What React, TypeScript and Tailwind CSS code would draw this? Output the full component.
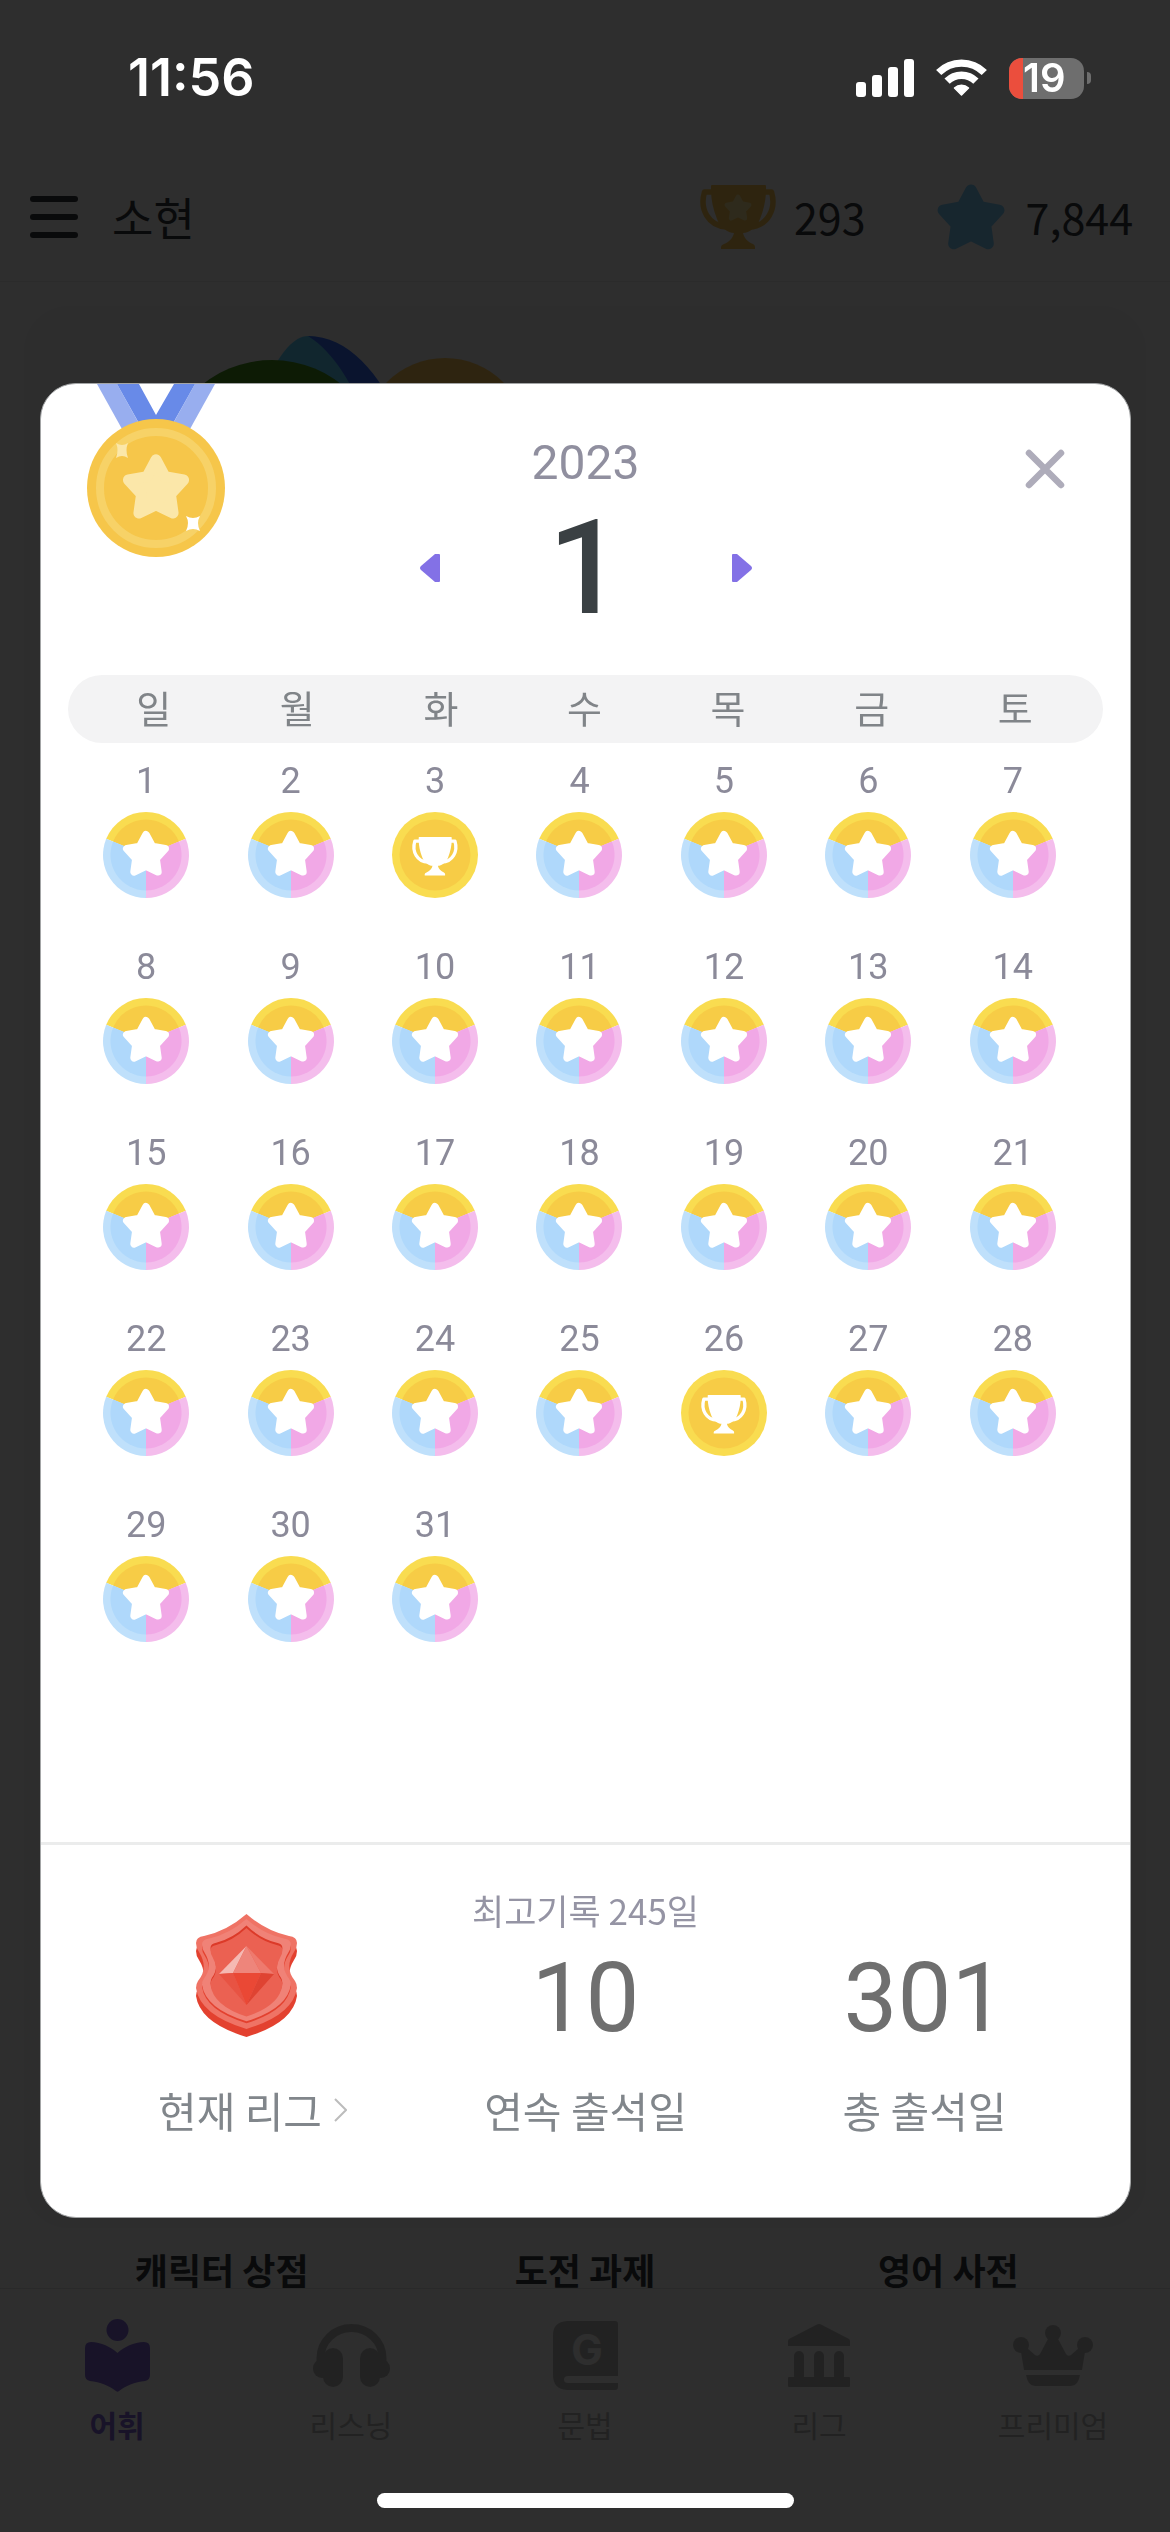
import { useState } from 'react'
import type { ReactNode } from 'react'

const WEEKDAYS = ['일', '월', '화', '수', '목', '금', '토']
const TROPHY_DAYS = [3, 26]
const SHORTCUTS = ['캐릭터 상점', '도전 과제', '영어 사전']

const SHIELD =
  'M50.5 0Q70 17 93 22Q101 23 101 29Q101 34 98 38Q88 54 99 67Q101 70 101 74Q97 101 50.5 115Q4 101 0 74Q0 70 2 67Q13 54 3 38Q0 34 0 29Q0 23 8 22Q31 17 50.5 0Z'

// Rounded star, drawn in a 100 x 96 box
function StarShape({ color }: { color: string }) {
  return (
    <polygon
      points="50,10 62.9,34.2 89.9,39 70.9,59.8 74.7,87 50,75 25.3,87 29.1,59.8 10.1,39 37.1,34.2"
      fill={color}
      stroke={color}
      strokeWidth="16"
      strokeLinejoin="round"
    />
  )
}

// Two-handled cup, drawn in a 78 x 64 box
function TrophyShape({ color }: { color: string }) {
  return (
    <g>
      <path
        d="M13 0H66Q67 0 67 1V5C67 14 65 24 61 34C58 42 50 48 44 48C45 53 49 57 54 59Q56 60 56 62V64H22V62Q22 60 25 59C30 57 34 53 35 48C29 48 21 42 18 34C14 24 12 14 12 5V1Q12 0 13 0Z"
        fill={color}
      />
      <path
        d="M14 7H5.500C0.500 24 9 41 28 42M65 7H72.500C77.500 24 69 41 50 42"
        fill="none"
        stroke={color}
        strokeWidth="5.500"
        strokeLinejoin="round"
      />
    </g>
  )
}

function StatusBar() {
  return (
    <div className="relative z-20 flex h-[156px] items-center justify-between pl-[128px] pr-[79px] text-white">
      <span className="font-['Inter',sans-serif] text-[52px] font-semibold leading-none">11:56</span>
      <div className="flex items-center gap-[22px]">
        <svg width="58" height="38" viewBox="0 0 58 38" fill="currentColor">
          <rect x="0" y="23" width="10" height="15" rx="3" />
          <rect x="16" y="16" width="10" height="22" rx="3" />
          <rect x="32" y="8" width="10" height="30" rx="3" />
          <rect x="48" y="0" width="10" height="38" rx="3" />
        </svg>
        <svg width="51" height="38" viewBox="0 0 51 38" fill="none" stroke="currentColor" strokeWidth="7.4">
          <path d="M2.700 13.500A32.300 32.300 0 0 1 48.300 13.500" />
          <path d="M11.100 22.200A20.300 20.300 0 0 1 39.900 22.200" />
          <path d="M25.500 36L18.500 29A10 10 0 0 1 32.500 29Z" fill="currentColor" strokeWidth="1.500" strokeLinejoin="round" />
        </svg>
        <div className="flex items-center gap-[3px]">
          <div className="flex h-[41px] w-[75px] items-center rounded-[13px] bg-[#6e6e6e]">
            <div className="h-full w-[14px] rounded-l-[13px] bg-[#eb4e3d]" />
            <span className="font-['Inter',sans-serif] text-[40px] font-semibold leading-none">19</span>
          </div>
          <div className="h-[12px] w-[4px] rounded-r-full bg-[#6e6e6e]" />
        </div>
      </div>
    </div>
  )
}

function Header() {
  return (
    <header className="flex h-[126px] items-center border-b border-[#ececec] pb-[4px] pl-[30px] pr-[37px] text-[45px] leading-none text-[#35393c]">
      <button aria-label="메뉴" className="flex w-[48px] flex-col gap-[12px]">
        <span className="h-[6px] w-full rounded-full bg-[#35393c]" />
        <span className="h-[6px] w-full rounded-full bg-[#35393c]" />
        <span className="h-[6px] w-full rounded-full bg-[#35393c]" />
      </button>
      <span className="ml-[34px] flex-1">소현</span>
      <svg width="78" height="64" viewBox="0 0 78 64">
        <TrophyShape color="#ffc853" />
        <g transform="translate(25 9) scale(0.28)">
          <StarShape color="#ffe79c" />
        </g>
      </svg>
      <span className="ml-[17px] text-[43px]">293</span>
      <svg className="ml-[70px]" width="70" height="67" viewBox="0 0 100 96">
        <StarShape color="#7fd0ff" />
      </svg>
      <span className="ml-[20px] text-[43px]">7,844</span>
    </header>
  )
}

const NAV_ITEMS: { label: string; icon: ReactNode }[] = [
  {
    label: '어휘',
    icon: (
      <svg width="65" height="73" viewBox="0 0 65 73" fill="currentColor">
        <circle cx="32.5" cy="11" r="11" />
        <path d="M6 23C16 23 26 28 32.500 34C39 28 49 23 59 23Q65 23 65 29V56Q65 61 60 62C50 63 40 67 34 72Q32.500 73.500 31 72C25 67 15 63 5 62Q0 61 0 56V29Q0 23 6 23Z" />
      </svg>
    ),
  },
  {
    label: '리스닝',
    icon: (
      <svg width="77" height="63" viewBox="0 0 77 63" fill="currentColor">
        <path d="M7.500 42V34A31 30 0 0 1 69.500 34V42" fill="none" stroke="currentColor" strokeWidth="8" />
        <rect x="10" y="24" width="20" height="39" rx="10" />
        <rect x="47" y="24" width="20" height="39" rx="10" />
        <rect x="0" y="35" width="18" height="19" rx="9" />
        <rect x="59" y="35" width="18" height="19" rx="9" />
      </svg>
    ),
  },
  {
    label: '문법',
    icon: (
      <svg width="65" height="69" viewBox="0 0 65 69" fill="currentColor">
        <path d="M14 0H62Q65 0 65 3V55H15Q11 55 11 58.500Q11 62 15 62H65V66Q65 69 62 69H14Q0 68 0 54V14Q0 1 14 0Z" />
        <text x="34" y="44" textAnchor="middle" className="fill-white font-['Inter',sans-serif] text-[42px] font-bold">
          G
        </text>
      </svg>
    ),
  },
  {
    label: '리그',
    icon: (
      <svg width="62" height="63" viewBox="0 0 62 63" fill="currentColor">
        <path d="M28 1Q31 -1 34 1L61 15Q62 16 62 17V22H0V17Q0 16 1 15Z" />
        <rect x="6" y="27" width="10" height="30" rx="5" />
        <rect x="26" y="27" width="10" height="30" rx="5" />
        <rect x="46" y="27" width="10" height="30" rx="5" />
        <rect x="0" y="53" width="62" height="10" rx="1" />
      </svg>
    ),
  },
  {
    label: '프리미엄',
    icon: (
      <svg width="80" height="61" viewBox="0 0 80 61" fill="currentColor">
        <circle cx="8" cy="20" r="8" />
        <circle cx="40" cy="8" r="8" />
        <circle cx="72" cy="20" r="8" />
        <path d="M8 27L14 23L22 30Q25 32 27 29L36 12H44L53 29Q55 32 58 30L66 23L72 27L69 45H11Z" />
        <path d="M13 50H67Q65 61 58 61H22Q15 61 13 50Z" />
      </svg>
    ),
  },
]

function BottomNav() {
  return (
    <nav className="grid h-[244px] grid-cols-5 border-t border-[#e4e4e4] pt-[28px]">
      {NAV_ITEMS.map((item, i) => (
        <a
          key={item.label}
          href="#"
          className={`flex flex-col items-center gap-[13px] text-[30px] leading-[36px] ${
            i === 0 ? 'font-bold text-[#8369de]' : 'text-[#bdbdbd]'
          }`}
        >
          <span className="flex h-[76px] items-center">{item.icon}</span>
          {item.label}
        </a>
      ))}
    </nav>
  )
}

function Medal() {
  return (
    <svg className="absolute left-[46px] top-0" width="138" height="173" viewBox="0 0 138 173">
      <path d="M10 0H30L60 54H40Z" fill="#98aeef" />
      <path d="M128 0H108L78 54H98Z" fill="#98aeef" />
      <path d="M30 0H52L69 31L87 0H108L80 50H58Z" fill="#688ae8" />
      <circle cx="69" cy="104" r="69" fill="#f6c64a" />
      <circle cx="69" cy="104" r="56" fill="none" stroke="#f7d267" strokeWidth="8" />
      <g transform="translate(34.500 69) scale(0.690)">
        <StarShape color="#fbe7a9" />
      </g>
      <path d="M29 59Q35 63 41 59Q38 66 41 74Q35 70 29 74Q32 66 29 59Z" fill="#fbe7a9" />
      <path d="M99 132Q106 136 113 132Q109 139 113 147Q106 143 99 147Q103 139 99 132Z" fill="#fff" />
    </svg>
  )
}

function Coin({ trophy }: { trophy: boolean }) {
  if (trophy) {
    return (
      <svg width="86" height="86" viewBox="-43 -43 86 86">
        <circle r="43" fill="#f9dc50" />
        <circle r="35.5" fill="#f7cc46" />
        <g transform="translate(-23.500 -18) scale(0.600)">
          <TrophyShape color="#fff" />
        </g>
      </svg>
    )
  }
  return (
    <svg width="86" height="86" viewBox="-43 -43 86 86">
      <path d="M0 0L-39.800 -16.200A43 43 0 0 1 39.800 -16.200Z" fill="#f9dc50" />
      <path d="M0 0L39.800 -16.200A43 43 0 0 1 0 43Z" fill="#f4bdec" />
      <path d="M0 0V43A43 43 0 0 1 -39.800 -16.200Z" fill="#bfe0fb" />
      <path d="M0 0L-32.900 -13.400A35.500 35.500 0 0 1 32.900 -13.400Z" fill="#f7cc46" />
      <path d="M0 0L32.900 -13.400A35.500 35.500 0 0 1 0 35.500Z" fill="#f1a8e6" />
      <path d="M0 0V35.500A35.500 35.500 0 0 1 -32.900 -13.400Z" fill="#afd8fb" />
      <g transform="translate(-24 -25) scale(0.480)">
        <StarShape color="#fff" />
      </g>
    </svg>
  )
}

function LeagueBadge() {
  return (
    <svg width="101" height="123" viewBox="0 0 101 123">
      <path d={SHIELD} fill="#e3412f" transform="translate(0 8)" />
      <path d={SHIELD} fill="#ef7365" />
      <path d={SHIELD} fill="#e3412f" transform="translate(6 8) scale(0.880)" />
      <path d={SHIELD} fill="#f08277" transform="translate(6 5) scale(0.880 0.890)" />
      <path d={SHIELD} fill="#dc3a29" transform="translate(14.500 11.500) scale(0.712 0.780)" />
      <path d={SHIELD} fill="#eb6152" transform="translate(14.500 14) scale(0.712 0.770)" />
      <path d="M50.500 32L23 60L37 59Z" fill="#f5b9b3" />
      <path d="M50.500 32L37 59H65Z" fill="#ee857b" />
      <path d="M50.500 32L65 59L78 60Z" fill="#ee7a6e" />
      <path d="M23 60L37 59L50.500 91Z" fill="#e85343" />
      <path d="M37 59H65L50.500 91Z" fill="#ea4835" />
      <path d="M65 59L78 60L50.500 91Z" fill="#df4332" />
    </svg>
  )
}

function MonthArrow({ flip, label, onClick }: { flip?: boolean; label: string; onClick: () => void }) {
  return (
    <button aria-label={label} onClick={onClick}>
      <svg className={flip ? 'rotate-180' : ''} width="20" height="28" viewBox="0 0 20 28">
        <path d="M20 1V27Q20 28 19 28H15L1 16Q-1 14 1 12L15 0H19Q20 0 20 1Z" fill="#8371e6" />
      </svg>
    </button>
  )
}

function AttendanceDialog({ onClose }: { onClose: () => void }) {
  const [month, setMonth] = useState(1)
  const days = Array.from({ length: new Date(2023, month, 0).getDate() }, (_, i) => i + 1)

  return (
    <div className="fixed inset-0 z-10 flex items-center justify-center bg-black/82 pl-[40px] pr-[39px] pt-[69px]">
      <section
        role="dialog"
        aria-label="출석 달력"
        className="relative w-full overflow-hidden rounded-[36px] border border-[#a3a5a6] bg-white"
      >
        <Medal />
        <button aria-label="닫기" onClick={onClose} className="absolute right-[65px] top-[65px]">
          <svg width="40" height="40" viewBox="0 0 40 40" stroke="#aeacba" strokeWidth="6.5" strokeLinecap="round">
            <path d="M4 4L36 36M36 4L4 36" />
          </svg>
        </button>

        {/* Year and month switcher */}
        <div className="pt-[55px] text-center font-['Roboto',sans-serif]">
          <p className="text-[48px] leading-none text-[#908f9f]">2023</p>
          <div className="mt-[15px] flex items-center justify-center">
            <MonthArrow label="이전 달" onClick={() => setMonth(Math.max(1, month - 1))} />
            <h2 className="w-[292px] text-[132px] font-medium leading-none text-[#3a4043]">{month}</h2>
            <MonthArrow flip label="다음 달" onClick={() => setMonth(Math.min(12, month + 1))} />
          </div>
        </div>

        {/* Calendar */}
        <ul className="mx-[27px] mt-[41px] grid h-[68px] grid-cols-7 rounded-full bg-[#f3f3f4] pl-[14px] pr-[16px] text-center text-[38px] leading-[64px] text-[#808488]">
          {WEEKDAYS.map((day) => (
            <li key={day}>{day}</li>
          ))}
        </ul>
        <ol className="mt-[20px] grid min-h-[1079px] auto-rows-[186px] grid-cols-7 pl-[33px] pr-[45px] font-['Roboto',sans-serif] text-[36px] leading-none text-[#8b8a99]">
          {days.map((day) => (
            <li key={day} className="flex flex-col items-center gap-[13px]">
              {day}
              <Coin trophy={TROPHY_DAYS.includes(day)} />
            </li>
          ))}
        </ol>

        {/* Totals */}
        <div className="grid grid-cols-3 items-end border-t-[3px] border-[#ebecec] px-[36px] pb-[83px] pt-[47px] text-center text-[42px] leading-[48px] text-[#81868b]">
          <div className="flex flex-col items-center gap-[49px]">
            <LeagueBadge />
            <a href="#" className="flex items-center gap-[12px] pl-[12px]">
              현재 리그
              <svg width="13" height="24" viewBox="0 0 13 24" fill="none" stroke="#bcbcbc" strokeWidth="2">
                <path d="M1 1L12 12L1 23" />
              </svg>
            </a>
          </div>
          <div>
            <p className="mb-[22px] text-[35px] leading-[36px] text-[#9594a4]">최고기록 245일</p>
            <p className="mb-[40px] font-['Roboto',sans-serif] text-[96px] leading-none text-[#6f6f6f]">10</p>
            <p>연속 출석일</p>
          </div>
          <div>
            <p className="mb-[40px] font-['Roboto',sans-serif] text-[96px] leading-none text-[#6f6f6f]">301</p>
            <p>총 출석일</p>
          </div>
        </div>
      </section>
    </div>
  )
}

export default function App() {
  const [isOpen, setIsOpen] = useState(true)

  return (
    <div className="relative flex min-h-screen flex-col bg-[#fcfcfc] font-['Noto_Sans_CJK_KR',sans-serif]">
      {/* Keeps the clock and battery readable over the dimmed page */}
      <StatusBar />
      <Header />
      <main className="flex flex-1 flex-col">
        <div className="mx-[24px] mt-[24px] flex-1 overflow-hidden rounded-[45px] bg-[#f6f6fa] pl-[130px] pt-[30px]">
          <svg width="400" height="240" viewBox="0 0 400 240">
            <path d="M154 0C140 0 126 18 118 36L220 240H260C240 110 200 0 154 0Z" fill="#5ed3ff" />
            <path d="M154 0C180 16 200 50 215 90H250C225 36 194 0 154 0Z" fill="#3870ff" />
            <circle cx="118" cy="136" r="112" fill="#489620" />
            <circle cx="291" cy="104" r="82" fill="#ffc859" />
          </svg>
        </div>
        <ul className="mt-[20px] grid h-[40px] grid-cols-3 overflow-hidden px-[40px] text-center text-[36px] font-bold leading-[42px] text-[#35393c]">
          {SHORTCUTS.map((label) => (
            <li key={label}>{label}</li>
          ))}
        </ul>
      </main>
      <BottomNav />
      <div className="pointer-events-none fixed inset-x-0 bottom-[24px] z-20 flex justify-center">
        <div className="h-[15px] w-[417px] rounded-full bg-white" />
      </div>
      {isOpen && <AttendanceDialog onClose={() => setIsOpen(false)} />}
    </div>
  )
}
